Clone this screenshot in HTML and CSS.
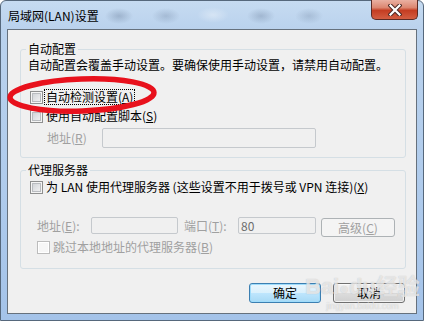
FILE: index.html
```html
<!DOCTYPE html>
<html lang="zh-CN">
<head>
<meta charset="utf-8">
<title>局域网(LAN)设置</title>
<link rel="stylesheet" href="styles.css">
</head>
<body>
<div class="window">
  <div class="titlebar">
    <span class="title">局域网(LAN)设置</span>
    <div class="close">
      <svg width="14" height="12" viewBox="0 0 14 12"><path d="M2.5 1.5 L11.5 10.5 M11.5 1.5 L2.5 10.5" stroke="#4d2a26" stroke-width="4.2" stroke-linecap="square"/><path d="M2.5 1.5 L11.5 10.5 M11.5 1.5 L2.5 10.5" stroke="#ffffff" stroke-width="2.2" stroke-linecap="square"/></svg>
    </div>
  </div>
  <div class="client">
    <fieldset class="group g1">
      <legend>自动配置</legend>
      <p class="desc">自动配置会覆盖手动设置。要确保使用手动设置，请禁用自动配置。</p>
      <div class="row r-auto"><span class="cb"></span><span class="lbl focus">自动检测设置(<u>A</u>)</span></div>
      <div class="row r-script"><span class="cb"></span><span class="lbl">使用自动配置脚本(<u>S</u>)</span></div>
      <div class="row r-addr"><span class="dis addr-r">地址(<u>R</u>)</span><span class="input wide"></span></div>
    </fieldset>
    <fieldset class="group g2">
      <legend>代理服务器</legend>
      <div class="row r-proxy"><span class="cb"></span><span class="lbl">为 LAN 使用代理服务器 (这些设置不用于拨号或 VPN 连接)(<u>X</u>)</span></div>
      <div class="row r-server">
        <span class="dis addr-e">地址(<u>E</u>):</span>
        <span class="input addr-in"></span>
        <span class="dis port">端口(<u>T</u>):</span>
        <span class="input port-in">80</span>
        <span class="btn adv">高级(<u>C</u>)</span>
      </div>
      <div class="row r-bypass"><span class="cb cb-dis"></span><span class="lbl dis">跳过本地地址的代理服务器(<u>B</u>)</span></div>
    </fieldset>
    <div class="buttons">
      <span class="btn default">确定</span>
      <span class="btn">取消</span>
    </div>
  </div>
  <svg class="mark" width="424" height="321" viewBox="0 0 424 321"><ellipse cx="82" cy="95" rx="72" ry="16" transform="rotate(-2 82 95)" fill="none" stroke="#e8111c" stroke-width="5.5"/></svg>
  <div class="watermark"><span class="wm-big">Bai<span class="paw">●</span>du经验</span><span class="wm-small">jingyan.baidu.com</span></div>
</div>
</body>
</html>
```
FILE: styles.css
```css
* { box-sizing: border-box; }
html, body { margin: 0; padding: 0; background: #ffffff; }
body {
  width: 424px;
  height: 321px;
  overflow: hidden;
  font-family: "Noto Sans CJK SC", "Liberation Sans", sans-serif;
  font-size: 12px;
  color: #000;
}
u { text-decoration: underline; }

.window {
  position: relative;
  width: 424px;
  height: 321px;
  border: 1px solid #56687c;
  border-radius: 6px 6px 0 0;
  background: linear-gradient(to bottom, #c6dbf1 0, #bad2ed 28px, #afcbec 60%, #a4c3e9 100%);
  padding: 0 6px;
  display: flex;
  flex-direction: column;
}

.titlebar {
  height: 28px;
  margin: 0 -6px;
  padding: 0 5px 0 7px;
  display: flex;
  justify-content: space-between;
  align-items: flex-start;
  background:
    radial-gradient(ellipse 14px 8px at 118px 15px, rgba(70,90,120,0.28), transparent),
    radial-gradient(ellipse 14px 8px at 165px 15px, rgba(70,90,120,0.22), transparent),
    radial-gradient(ellipse 16px 8px at 212px 14px, rgba(255,255,255,0.35), transparent),
    radial-gradient(ellipse 14px 8px at 260px 15px, rgba(70,90,120,0.25), transparent),
    radial-gradient(ellipse 14px 8px at 308px 15px, rgba(70,90,120,0.2), transparent);
}
.title {
  margin-top: 8px;
  line-height: 14px;
  font-size: 12px;
}
.close {
  width: 47px;
  height: 20px;
  margin-top: -1px;
  border: 1px solid #5b2b25;
  border-top: none;
  border-radius: 0 0 5px 5px;
  background: linear-gradient(to bottom, #eab0a2 0%, #dc8670 40%, #c43d22 55%, #d35e42 100%);
  display: flex;
  align-items: center;
  justify-content: center;
}

.client {
  width: 410px;
  height: 285px;
  border: 1px solid #66717d;
  background: #f0f0f0;
  padding: 0 10px 0 12px;
}

.group {
  margin: 0;
  min-width: 0;
  border: 1px solid #d5dfe5;
  border-radius: 3px;
  padding: 0 0 9px 7px;
}
.group legend {
  padding: 0 2px;
  margin-left: -2px;
  line-height: 14px;
}
.g1 { margin-top: 12px; }
.g2 { margin-top: 5px; padding-bottom: 13px; }

.desc {
  margin: 2px 0 0;
  line-height: 14px;
  white-space: nowrap;
}

.row {
  display: flex;
  align-items: center;
  height: 16px;
  white-space: nowrap;
}
.r-auto { margin-top: 17px; }
.r-script { margin-top: 3px; }
.r-addr { margin-top: 4px; height: 20px; }
.r-proxy { margin-top: 2px; }
.r-server { margin-top: 22px; height: 20px; align-items: flex-start; }
.r-bypass { margin-top: 2px; }

.cb {
  flex: none;
  width: 13px;
  height: 13px;
  margin-left: 2px;
  border: 1px solid #8e8f8f;
  background: linear-gradient(135deg, #c9cdd2 0%, #e6e7e9 60%, #f6f6f6 100%);
  box-shadow: inset 0 0 0 1px #f4f4f4, inset 0 0 0 2px #b9bcc0;
}
.cb-dis {
  margin-left: 9px;
  border-color: #bcbcbc;
  background: #f6f6f6;
  box-shadow: inset 0 0 0 1px #ffffff;
}

.lbl {
  margin-left: 1px;
  padding: 0 1px;
  border: 1px dotted transparent;
  line-height: 14px;
}
.focus { border-color: #000; }
.dis { color: #a0a0a0; }

.addr-r {
  margin-left: 19px;
  width: 55px;
  line-height: 20px;
}
.input {
  flex: none;
  border: 1px solid #c5c9cd;
  border-radius: 2px;
  background: #f0f0f0;
}
.wide { width: 214px; height: 20px; }

.addr-e { margin-left: 9px; width: 54px; line-height: 18px; }
.addr-in { width: 87px; height: 17px; }
.port { margin-left: 6px; width: 54px; line-height: 18px; }
.port-in {
  width: 78px;
  height: 17px;
  padding-left: 2px;
  line-height: 15px;
  color: #6d6d6d;
}

.btn {
  flex: none;
  width: 72px;
  height: 20px;
  border: 1px solid #707070;
  border-radius: 3px;
  background: linear-gradient(to bottom, #f2f2f2 0%, #ebebeb 50%, #dddddd 50%, #cfcfcf 100%);
  box-shadow: inset 0 0 0 1px rgba(255,255,255,0.7);
  display: flex;
  align-items: center;
  justify-content: center;
  line-height: 14px;
}
.btn.default {
  border-color: #3c7fb1;
  background: linear-gradient(to bottom, #eaf6fd 0%, #d9f0fc 50%, #bee6fd 50%, #a7d9f5 100%);
  box-shadow: inset 0 0 0 1px #9fdcfb;
}
.btn.adv {
  width: 74px;
  height: 19px;
  margin-left: 5px;
  margin-top: 1px;
  border-color: #adb2b5;
  background: #f4f4f4;
  box-shadow: none;
  color: #a0a0a0;
}

.buttons {
  display: flex;
  justify-content: flex-end;
  gap: 12px;
  margin-top: 14px;
  padding-right: 1px;
}

.mark {
  position: absolute;
  left: -1px;
  top: -1px;
  pointer-events: none;
}

.watermark {
  position: absolute;
  left: 304px;
  top: 274px;
  display: flex;
  flex-direction: column;
  align-items: center;
  color: rgba(255,255,255,0.6);
  text-shadow: 0 0 1px rgba(150,150,150,0.6);
  pointer-events: none;
}
.wm-big {
  font-family: "Liberation Sans", "Noto Sans CJK SC", sans-serif;
  font-weight: bold;
  font-size: 22px;
  line-height: 24px;
}
.paw { font-size: 16px; }
.wm-small {
  font-family: "Liberation Sans", sans-serif;
  font-size: 9px;
  line-height: 10px;
}
```
